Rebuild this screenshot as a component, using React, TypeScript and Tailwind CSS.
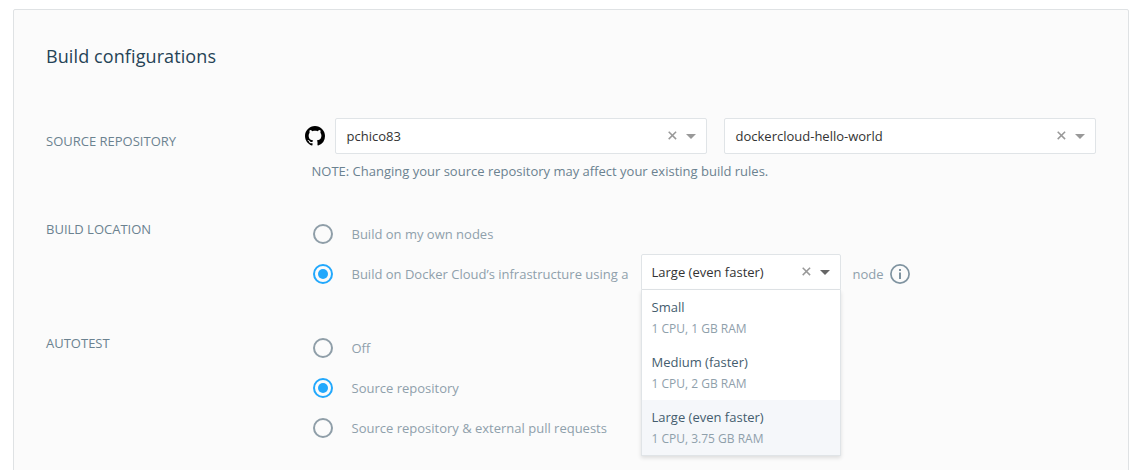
import React from 'react';

function GithubMark() {
  return (
    <svg width="20" height="20" viewBox="0 0 16 16" fill="#000" className="shrink-0">
      <path d="M8 0C3.58 0 0 3.58 0 8c0 3.54 2.29 6.53 5.47 7.59.4.07.55-.17.55-.38 0-.19-.01-.82-.01-1.49-2.01.37-2.53-.49-2.69-.94-.09-.23-.48-.94-.82-1.13-.28-.15-.68-.52-.01-.53.63-.01 1.08.58 1.23.82.72 1.21 1.87.87 2.33.66.07-.52.28-.87.51-1.07-1.78-.2-3.64-.89-3.64-3.95 0-.87.31-1.59.82-2.15-.08-.2-.36-1.02.08-2.12 0 0 .67-.21 2.2.82.64-.18 1.32-.27 2-.27s1.36.09 2 .27c1.53-1.04 2.2-.82 2.2-.82.44 1.1.16 1.92.08 2.12.51.56.82 1.27.82 2.15 0 3.07-1.87 3.75-3.65 3.95.29.25.54.73.54 1.48 0 1.07-.01 1.93-.01 2.2 0 .21.15.46.55.38A8.01 8.01 0 0 0 16 8c0-4.42-3.58-8-8-8z" />
    </svg>
  );
}

function SelectControls({ dark = false }: { dark?: boolean }) {
  return (
    <div className="flex items-center gap-[9px] pr-[10px] pb-px">
      <svg width="9" height="9" viewBox="0 0 9 9" stroke="#999" strokeWidth="1.5" fill="none">
        <path d="M0.7 0.7 8.1 8.1M8.1 0.7 0.7 8.1" />
      </svg>
      <svg width="10" height="5" viewBox="0 0 10 5" fill={dark ? '#666' : '#999'} className="mt-[2px]">
        <path d="M0 0h10L5 5z" />
      </svg>
    </div>
  );
}

function Select({ value }: { value: string }) {
  return (
    <div className="flex h-9 w-[372px] items-center justify-between rounded-[2px] border border-[#e0e4e7] bg-white pl-[10.5px] text-[#333]">
      <span>{value}</span>
      <SelectControls />
    </div>
  );
}

function Radio({ checked = false }: { checked?: boolean }) {
  return (
    <svg width="20" height="20" viewBox="0 0 20 20" fill="none" className="shrink-0">
      <circle cx="10" cy="10" r="9" strokeWidth="2" stroke={checked ? '#22a8fc' : '#8f9ea8'} />
      {checked && <circle cx="10" cy="10" r="5" fill="#22a8fc" />}
    </svg>
  );
}

function RadioRow({ label, checked }: { label: string; checked?: boolean }) {
  return (
    <div className="flex h-10 items-center gap-[18.5px]">
      <Radio checked={checked} />
      <span className="text-[#8fa0ab]">{label}</span>
    </div>
  );
}

const sizes = [
  { name: 'Small', detail: '1 CPU, 1 GB RAM', active: false },
  { name: 'Medium (faster)', detail: '1 CPU, 2 GB RAM', active: false },
  { name: 'Large (even faster)', detail: '1 CPU, 3.75 GB RAM', active: true },
];

function NodeSelect() {
  return (
    <div className="relative h-9 w-[200px] shrink-0">
      <div className="flex h-9 items-center justify-between rounded-t-[2px] border border-[#e0e4e7] bg-white pl-[9.5px] text-[#333]">
        <span>Large (even faster)</span>
        <SelectControls dark />
      </div>
      <div className="absolute top-9 left-0 z-10 w-[200px] border border-t-0 border-[#e0e4e7] bg-white shadow-[0_2px_4px_rgba(0,0,0,0.12)]">
        {sizes.map((s) => (
          <div key={s.name} className={s.active ? 'h-[55px] bg-[#f5f7fa] pt-[7px] pl-[9.5px]' : 'h-[55px] pt-[7px] pl-[9.5px]'}>
            <div className="h-[21px] leading-[21px] text-[#445d6e]">{s.name}</div>
            <div className="h-[21px] text-[12px] leading-[21px] text-[#8fa0ab]">{s.detail}</div>
          </div>
        ))}
      </div>
    </div>
  );
}

function Label({ children }: { children: React.ReactNode }) {
  return <div className="w-[267px] shrink-0 leading-[18px] text-[#6b8290]">{children}</div>;
}

export default function App() {
  return (
    <div className="h-[470px] overflow-hidden bg-white pt-[9px] pl-[13px] font-['Open_Sans',sans-serif] text-[13px] leading-[18px]">
      <div className="h-[480px] w-[1116px] rounded-[2px] border border-[#dfe2e4] bg-[#fbfbfb] pl-8">
        <h1 className="mt-[34px] h-6 text-[18px] leading-6 tracking-[0.1px] text-[#254356]">Build configurations</h1>

        <div className="mt-[50px] flex h-[96px]">
          <div className="w-[259px] shrink-0 pt-[14px]">
            <Label>SOURCE REPOSITORY</Label>
          </div>
          <div>
            <div className="flex h-9 items-center">
              <GithubMark />
              <div className="ml-[10px] flex gap-[17px]">
                <Select value="pchico83" />
                <Select value="dockercloud-hello-world" />
              </div>
            </div>
            <p className="mt-[8px] pl-[6.5px] text-[#6b8290]">
              NOTE: Changing your source repository may affect your existing build rules.
            </p>
          </div>
        </div>

        <div className="flex h-[114px]">
          <div className="pt-[6px]">
            <Label>BUILD LOCATION</Label>
          </div>
          <div>
            <RadioRow label="Build on my own nodes" />
            <div className="flex h-10">
              <div className="w-[328px] shrink-0">
                <RadioRow label="Build on Docker Cloud’s infrastructure using a" checked />
              </div>
              <NodeSelect />
              <div className="ml-[11.5px] flex h-10 items-center gap-[6px]">
                <span className="text-[#8fa0ab]">node</span>
                <svg width="20" height="20" viewBox="0 0 20 20" fill="none">
                  <circle cx="10" cy="10" r="9.1" stroke="#7f93a0" strokeWidth="1.7" />
                  <path d="M9 5h2v2H9zM9 8.5h2V15H9z" fill="#7f93a0" />
                </svg>
              </div>
            </div>
          </div>
        </div>

        <div className="flex">
          <div className="pt-[6px]">
            <Label>AUTOTEST</Label>
          </div>
          <div>
            <RadioRow label="Off" />
            <RadioRow label="Source repository" checked />
            <RadioRow label="Source repository &amp; external pull requests" />
          </div>
        </div>
      </div>
    </div>
  );
}
